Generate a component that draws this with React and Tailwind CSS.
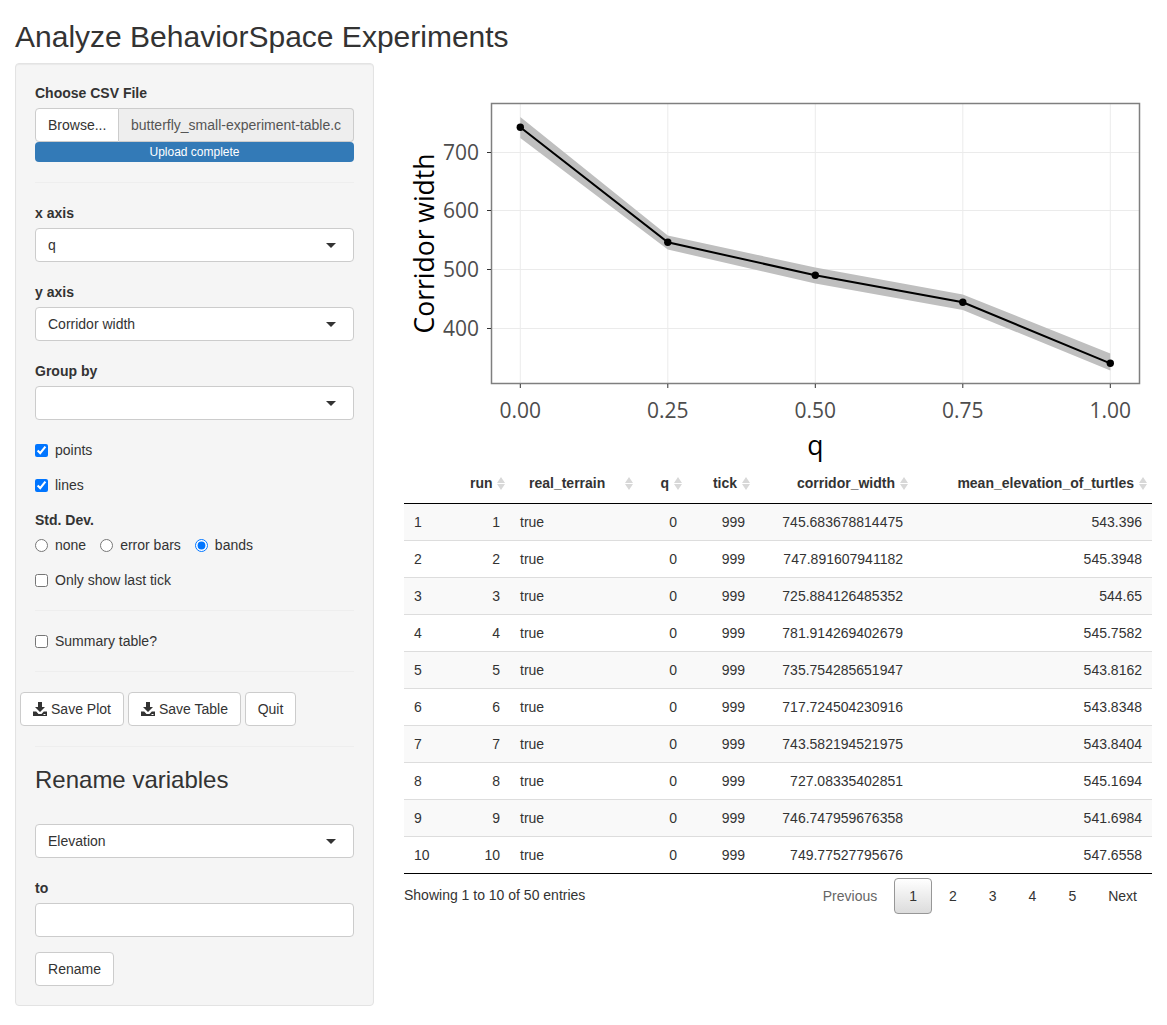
import React from "react";

const rows = [
  [1, "745.683678814475", "543.396"],
  [2, "747.891607941182", "545.3948"],
  [3, "725.884126485352", "544.65"],
  [4, "781.914269402679", "545.7582"],
  [5, "735.754285651947", "543.8162"],
  [6, "717.724504230916", "543.8348"],
  [7, "743.582194521975", "543.8404"],
  [8, "727.08335402851", "545.1694"],
  [9, "746.747959676358", "541.6984"],
  [10, "749.77527795676", "547.6558"],
];

function Caret() {
  return <span className="absolute right-[17px] top-[14px] w-0 h-0 border-x-[5px] border-t-[5px] border-x-transparent border-t-[#333]" />;
}

function Select({ value, className = "" }) {
  return (
    <div className={`relative h-[34px] w-[319px] bg-white border border-[#ccc] rounded pl-3 leading-[32px] ${className}`}>
      {value}
      <Caret />
    </div>
  );
}

function Label({ children, className = "" }) {
  return <div className={`font-bold h-5 mb-[5px] ${className}`}>{children}</div>;
}

function Check({ label, checked, className = "" }) {
  return (
    <label className={`flex items-center h-5 ${className}`}>
      <input type="checkbox" checked={!!checked} readOnly className="m-0 mr-[7px] w-[13px] h-[13px]" />
      {label}
    </label>
  );
}

function Radio({ label, checked, className = "" }) {
  return (
    <label className={`flex items-center h-5 ${className}`}>
      <input type="radio" name="sd" checked={!!checked} readOnly className="m-0 mr-[7px] w-[13px] h-[13px]" />
      {label}
    </label>
  );
}

function Hr({ className = "" }) {
  return <div className={`h-px bg-[#eee] ${className}`} />;
}

function Download() {
  return (
    <svg width="14" height="14" viewBox="0 0 14 14" className="mr-1">
      <path fill="#333" d="M5 0h4v5h3L7 10 2 5h3z" />
      <path fill="#333" d="M0 9.500h3.200L5.500 12h3l2.300-2.500H14V14H0z" />
      <rect x="10.500" y="12" width="2" height="1" fill="#fff" />
    </svg>
  );
}

function Btn({ children, className = "" }) {
  return (
    <div className={`h-[34px] flex items-center justify-center bg-white border border-[#ccc] rounded ${className}`}>
      {children}
    </div>
  );
}

function Sort() {
  return (
    <svg width="8" height="13" viewBox="0 0 8 13" className="absolute right-[5px] top-[14px]">
      <path d="M4 0l4 6H0z" fill="#d8d8d8" />
      <path d="M0 7h8l-4 6z" fill="#d8d8d8" />
    </svg>
  );
}

function Plot() {
  const ox = 404;
  const oy = 83;
  const xs = [520.3, 667.8, 815.3, 962.8, 1110.3].map((v) => v - ox);
  const ys = [127.3, 242.3, 275.3, 302.3, 363.3].map((v) => v - oy);
  const upper = [117, 235.5, 267.5, 294.5, 353.5].map((v) => v - oy);
  const lower = [138, 249.5, 283.5, 310, 370.5].map((v) => v - oy);
  const grid = [152.5, 210.5, 269.5, 328.5].map((v) => v - oy);
  const band = xs.map((x, i) => `${x},${upper[i]}`).concat(xs.map((x, i) => `${x},${lower[i]}`).reverse()).join(" ");
  const line = xs.map((x, i) => `${x},${ys[i]}`).join(" ");
  const tickFont = { fontFamily: "'Open Sans', sans-serif", fontSize: 21, fill: "#4d4d4d" };
  const axisFont = { fontFamily: "'Open Sans', sans-serif", fontSize: 26.5, fill: "#000" };
  const labels = ["0.00", "0.25", "0.50", "0.75", "1.00"];
  const ylabels = ["700", "600", "500", "400"];
  return (
    <svg width="748" height="380" viewBox="0 0 748 380" className="block">
      <rect x="87.5" y="20.5" width="648" height="280" fill="#fff" />
      {grid.map((y) => (
        <line key={y} x1="87" x2="735" y1={y} y2={y} stroke="#ebebeb" strokeWidth="1" />
      ))}
      {xs.map((x) => (
        <line key={x} x1={x} x2={x} y1="20" y2="300" stroke="#ebebeb" strokeWidth="1" />
      ))}
      <polygon points={band} fill="#bfbfbf" />
      <polyline points={line} fill="none" stroke="#000" strokeWidth="2" />
      {xs.map((x, i) => (
        <circle key={x} cx={x} cy={ys[i]} r="3.7" fill="#000" />
      ))}
      <rect x="87.5" y="20.5" width="648" height="280" fill="none" stroke="#7f7f7f" strokeWidth="1.5" />
      {grid.map((y) => (
        <line key={y} x1="83" x2="87" y1={y} y2={y} stroke="#333" strokeWidth="1" />
      ))}
      {xs.map((x) => (
        <line key={x} x1={x} x2={x} y1="301" y2="305" stroke="#333" strokeWidth="1" />
      ))}
      {ylabels.map((t, i) => (
        <text key={t} x="75" y={grid[i] + 7.5} textAnchor="end" style={tickFont}>{t}</text>
      ))}
      {labels.map((t, i) => (
        <text key={t} x={xs[i]} y="335" textAnchor="middle" style={tickFont}>{t}</text>
      ))}
      <text x={xs[2]} y="372" textAnchor="middle" style={axisFont}>q</text>
      <text transform="translate(30,160.5) rotate(-90)" textAnchor="middle" style={axisFont}>Corridor width</text>
    </svg>
  );
}

function Th({ children, className = "" }) {
  return (
    <th className={`relative font-bold pt-[10px] pb-[9px] pl-[10px] pr-[18px] border-b border-black text-right ${className}`}>
      {children}
      {children && <Sort />}
    </th>
  );
}

function Page({ children, current, className = "" }) {
  return (
    <div
      className={`ml-[2px] h-9 px-[14px] leading-[20px] py-[7px] border rounded-sm ${
        current ? "border-[#979797] bg-gradient-to-b from-white to-[#dcdcdc]" : "border-transparent"
      } ${className}`}
    >
      {children}
    </div>
  );
}

export default function App() {
  return (
    <div className="relative h-[1025px] overflow-hidden bg-white px-[15px] text-[14px] leading-5 text-[#333] font-['Liberation_Sans',Arial,sans-serif]">
      <h2 className="pt-5 pb-[10px] text-[30px] leading-[33px] font-normal">Analyze BehaviorSpace Experiments</h2>
      <div className="flex items-start">
        <div className="w-[359px] h-[943px] shrink-0 bg-[#f5f5f5] border border-[#e3e3e3] rounded p-[19px] shadow-[inset_0_1px_1px_rgba(0,0,0,0.05)]">
          <Label>Choose CSV File</Label>
          <div className="flex h-[34px] w-[319px]">
            <div className="w-[84px] shrink-0 bg-white border border-[#ccc] rounded-l pl-3 leading-[32px]">Browse...</div>
            <div className="flex-1 bg-[#eee] border border-l-0 border-[#ccc] rounded-r pl-3 leading-[32px] text-[#555] overflow-hidden whitespace-nowrap">
              butterfly_small-experiment-table.c
            </div>
          </div>
          <div className="h-5 w-[319px] bg-[#337ab7] rounded text-white text-[12px] font-normal text-center leading-5">Upload complete</div>
          <Hr className="mt-5 mb-5" />
          <Label>x axis</Label>
          <Select value="q" />
          <Label className="mt-5">y axis</Label>
          <Select value="Corridor width" />
          <Label className="mt-5">Group by</Label>
          <Select value="" />
          <Check label="points" checked className="mt-5" />
          <Check label="lines" checked className="mt-[15px]" />
          <div className="font-bold h-5 mt-[15px]">Std. Dev.</div>
          <div className="flex mt-[5px]">
            <Radio label="none" className="mr-[14px]" />
            <Radio label="error bars" className="mr-[14px]" />
            <Radio label="bands" checked />
          </div>
          <Check label="Only show last tick" className="mt-[15px]" />
          <Hr className="mt-5 mb-5" />
          <Check label="Summary table?" />
          <Hr className="mt-5 mb-5" />
          <div className="flex gap-1 -ml-[15px]">
            <Btn className="w-[104px]"><Download />Save Plot</Btn>
            <Btn className="w-[113px]"><Download />Save Table</Btn>
            <Btn className="w-[51px]">Quit</Btn>
          </div>
          <Hr className="mt-5" />
          <h3 className="mt-5 text-[24px] leading-[26px] font-normal">Rename variables</h3>
          <Select value="Elevation" className="mt-[31px]" />
          <Label className="mt-5">to</Label>
          <div className="h-[34px] w-[319px] bg-white border border-[#ccc] rounded" />
          <Btn className="w-[79px] mt-[15px]">Rename</Btn>
        </div>
        <div className="ml-[30px] w-[748px] shrink-0">
          <div className="pt-5">
            <Plot />
          </div>
          <table className="w-[748px] table-fixed border-collapse">
            <colgroup>
              <col className="w-[56px]" />
              <col className="w-[50px]" />
              <col className="w-[128px]" />
              <col className="w-[49px]" />
              <col className="w-[68px]" />
              <col className="w-[158px]" />
              <col className="w-[239px]" />
            </colgroup>
            <thead>
              <tr className="h-[40px]">
                <Th />
                <Th>run</Th>
                <Th className="!text-left !pl-[19px]">real_terrain</Th>
                <Th>q</Th>
                <Th>tick</Th>
                <Th>corridor_width</Th>
                <Th>mean_elevation_of_turtles</Th>
              </tr>
            </thead>
            <tbody>
              {rows.map(([n, w, e], i) => (
                <tr key={n} className={`h-[37px] border-b ${i === 9 ? "border-black" : "border-[#ddd]"} ${i % 2 === 0 ? "bg-[#f9f9f9]" : "bg-white"}`}>
                  <td className="px-[10px] py-2">{n}</td>
                  <td className="px-[10px] py-2 text-right">{n}</td>
                  <td className="px-[10px] py-2">true</td>
                  <td className="px-[10px] py-2 text-right">0</td>
                  <td className="px-[10px] py-2 text-right">999</td>
                  <td className="px-[10px] py-2 text-right">{w}</td>
                  <td className="px-[10px] py-2 text-right">{e}</td>
                </tr>
              ))}
            </tbody>
          </table>
          <div className="flex justify-between items-start">
            <div className="mt-[11px]">Showing 1 to 10 of 50 entries</div>
            <div className="flex mt-1">
              <Page className="text-[#666]">Previous</Page>
              <Page current>1</Page>
              <Page>2</Page>
              <Page>3</Page>
              <Page>4</Page>
              <Page>5</Page>
              <Page>Next</Page>
            </div>
          </div>
        </div>
      </div>
    </div>
  );
}
